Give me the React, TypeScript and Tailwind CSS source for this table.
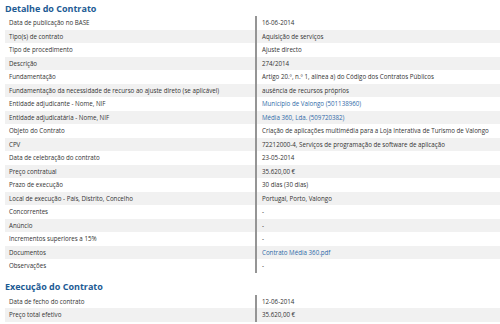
import React from "react";

type Row = { label: string; value: string; link?: boolean };

const detalhe: Row[] = [
  { label: "Data de publicação no BASE", value: "16-06-2014" },
  { label: "Tipo(s) de contrato", value: "Aquisição de serviços" },
  { label: "Tipo de procedimento", value: "Ajuste directo" },
  { label: "Descrição", value: "274/2014" },
  { label: "Fundamentação", value: "Artigo 20.º, n.º 1, alínea a) do Código dos Contratos Públicos" },
  { label: "Fundamentação da necessidade de recurso ao ajuste direto (se aplicável)", value: "ausência de recursos próprios" },
  { label: "Entidade adjudicante - Nome, NIF", value: "Município de Valongo (501138960)", link: true },
  { label: "Entidade adjudicatária - Nome, NIF", value: "Média 360, Lda. (509720382)", link: true },
  { label: "Objeto do Contrato", value: "Criação de aplicações multimédia para a Loja Interativa de Turismo de Valongo" },
  { label: "CPV", value: "72212000-4, Serviços de programação de software de aplicação" },
  { label: "Data de celebração do contrato", value: "23-05-2014" },
  { label: "Preço contratual", value: "35.620,00 €" },
  { label: "Prazo de execução", value: "30 dias (30 dias)" },
  { label: "Local de execução - País, Distrito, Concelho", value: "Portugal, Porto, Valongo" },
  { label: "Concorrentes", value: "-" },
  { label: "Anúncio", value: "-" },
  { label: "Incrementos superiores a 15%", value: "-" },
  { label: "Documentos", value: "Contrato Média 360.pdf", link: true },
  { label: "Observações", value: "-" },
];

const execucao: Row[] = [
  { label: "Data de fecho do contrato", value: "12-06-2014" },
  { label: "Preço total efetivo", value: "35.620,00 €" },
];

function Table({ rows }: { rows: Row[] }) {
  return (
    <div className="flex flex-col">
      {rows.map((r, i) => (
        <div
          key={i}
          className={`grid grid-cols-[250px_1fr] h-[13.5px] items-center ${i % 2 === 1 ? "bg-[#f1f1f1]" : "bg-white"}`}
        >
          <div className="pl-[4px] whitespace-nowrap leading-[9px]">{r.label}</div>
          <div className="h-full flex items-center border-l-[2px] border-[#959595] pl-[5px] whitespace-nowrap leading-[9px]">
            <span className={r.link ? "text-[#2f6aa8]" : ""}>{r.value}</span>
          </div>
        </div>
      ))}
    </div>
  );
}

export default function App() {
  return (
    <div
      className="w-[500px] h-[324px] overflow-hidden bg-white text-[#333] text-[6.2px]"
      style={{ fontFamily: '"Open Sans", sans-serif' }}
    >
      <div className="pl-[5px]">
        <h2 className="h-[16px] flex items-center text-[9px] leading-[11px] font-bold text-[#1d5b94]">Detalhe do Contrato</h2>
        <Table rows={detalhe} />
        <h2 className="h-[22px] flex items-end pb-[3px] text-[9px] leading-[11px] font-bold text-[#1d5b94]">Execução do Contrato</h2>
        <Table rows={execucao} />
      </div>
    </div>
  );
}
